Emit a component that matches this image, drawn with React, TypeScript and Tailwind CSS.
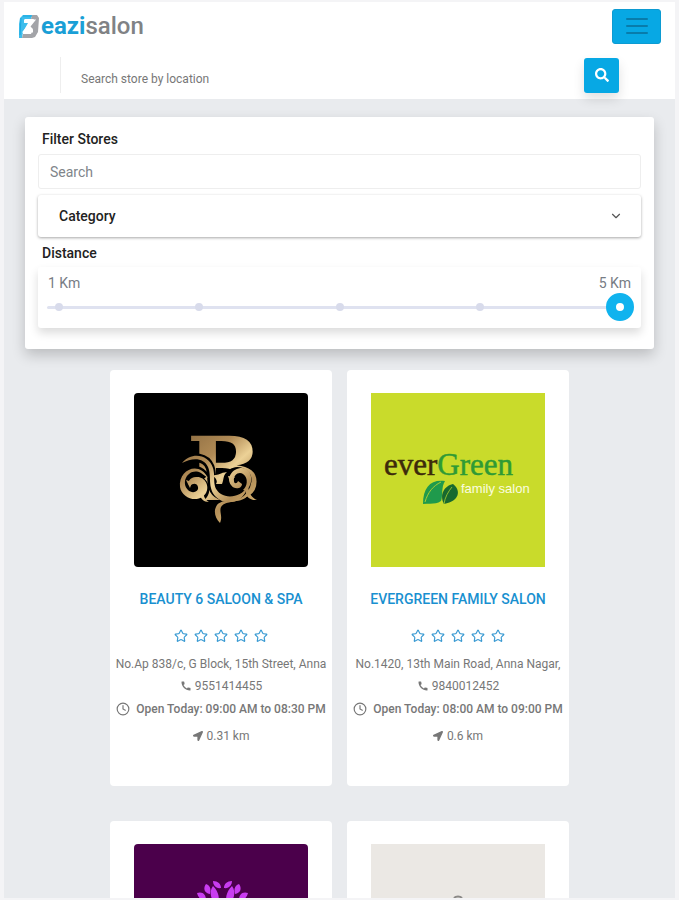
import React, { useState } from 'react';
import { FaLocationArrow, FaSearch } from 'react-icons/fa';
import { MdCall } from 'react-icons/md';
import { ChevronDown, Clock, Star } from 'lucide-react';

interface Store {
  id: number;
  logo: React.ReactNode;
  name?: string;
  address?: string;
  phone?: string;
  hours?: string;
  distance?: string;
}

const BrandMark = () => (
  <svg viewBox="0 0 21 25" className="h-[25px] w-[21px]" fill="none" aria-hidden="true">
    <path d="M5 1h9l-1 4H7L6 9h4L5 18l-1 6H1V10l1-6z" fill="#3dbdec" />
    <path d="M14 1h5l2 3-1 14-3 5-3 1H4l1-4h8l2-5-3-3 4-7h-3z" fill="#a3a4a8" />
    <path d="M6 7h9L7 17h8" stroke="#fff" strokeWidth="3" />
    <path d="M3 4 2 21M5 2h9" stroke="#19a8e0" strokeWidth="1" />
  </svg>
);

const BeautyLogo = () => (
  <svg viewBox="0 0 174 174" className="size-full rounded-sm bg-black" role="img" aria-label="Beauty 6">
    <defs>
      <linearGradient id="gold" gradientUnits="userSpaceOnUse" x1="50" y1="42" x2="125" y2="125">
        <stop offset="0" stopColor="#8f6f43" />
        <stop offset="0.3" stopColor="#b08a55" />
        <stop offset="0.5" stopColor="#ecd196" />
        <stop offset="0.7" stopColor="#b48f58" />
        <stop offset="1" stopColor="#e3c27d" />
      </linearGradient>
    </defs>
    <text x="53" y="107" fontSize="88" fontWeight="bold" fontFamily="DejaVu Serif, serif" fill="url(#gold)">B</text>
    <path d="M72 84C60 68 45 82 47 95s20 16 24 4c2-8-7-17-14-11" stroke="#000" strokeWidth="8" fill="#000" />
    <path d="M48 69c12-7 24-5 28 5 4 11-2 22 10 28 12 5 25-1 27-14 1-9-11-12-16-7" stroke="#000" strokeWidth="9" fill="none" />
    <path d="M86 86c6-12 20-12 25-4 3 9-3 18-13 19-8 0-13-6-12-15z" fill="#000" />
    <g fill="url(#gold)">
      <path d="M48 70c10-12 27-8 31 5 3 10-2 19 8 26 8 5 21 2 26-7-2 15-21 20-31 10-9-9-4-21-8-30-4-9-15-10-26-4z" />
      <path d="M74 85C65 67 44 77 46 94c2 12 19 17 26 6 4-7-1-17-10-16-6 0-10 6-6 9 3-3 7-3 8 1 1 5-6 7-10 3-8-8 1-23 13-17z" />
      <path d="M112 98c8-7 7-22-4-23-10 0-16 10-11 17 3 5 11 4 11-1l-4-3c-1 3-4 3-4 0-1-6 5-10 9-7 6 4 4 13 0 16z" />
      <path d="M114 102c-5 9-22 4-27 12-2 5 2 9-1 16-5-5-7-12-3-18 6-7 18-2 31-10zM114 93c1 8 4 12 9 14-8 1-13-5-11-12zM70 97c-1 7 1 9 5 12-7 0-10-5-8-11zM82 91c2-3 0-6-4-9 6 1 7-2 15-3-4 3-3 7-5 12zM52 87l6 2-2 6zM94 83l7 1-5 5z" />
    </g>
  </svg>
);

const EvergreenLogo = () => (
  <svg viewBox="0 0 174 174" className="size-full bg-[#c9db2b]" role="img" aria-label="Evergreen family salon">
    <text x="13" y="82" fontSize="31" fontFamily="Liberation Serif, serif" strokeWidth="0.5" fill="#3d2a0b" stroke="#3d2a0b">
      ever<tspan fill="#2f9a35" stroke="#2f9a35">Green</tspan>
    </text>
    <text x="90" y="100" fontSize="13" fontFamily="Liberation Sans, sans-serif" fill="#fbfde0">family salon</text>
    <path d="M52 111c0-17 8-25 22-23-4 6-2 16-4 20-5 4-10 2-18 3z" fill="#1f9a4c" />
    <path d="M54 109c3-10 8-16 16-20" stroke="#a8ce33" strokeWidth="1" fill="none" />
    <path d="M73 111c-5-9 0-18 9-20 8 6 7 17-9 20z" fill="#17682f" />
    <path d="M73 111c1-7 4-12 8-17" stroke="#8bbd2f" strokeWidth="1" fill="none" />
  </svg>
);

const LotusLogo = () => (
  <svg viewBox="0 0 174 174" className="size-full rounded-sm bg-[#4b004b]" role="img" aria-label="Lotus">
    <g fill="#c83cf0">
      <path d="M87 44c-5 1-8-3-8-7 5 0 8 3 8 7zM90 44c5 1 8-3 8-7-5 0-8 3-8 7z" />
      <path d="M76 50c-6-1-7-6-4-10 5 2 5 6 4 10zM101 50c6-1 7-6 4-10-5 2-5 6-4 10z" />
      <path d="M79 42c-5 7-1 14 3 20 5-6 3-14-3-20zM98 42c5 7 1 14-3 20-5-6-3-14 3-20z" />
      <path d="M72 56c-5 1-8-3-9-7 6-2 9 2 9 7zM105 56c5 1 8-3 9-7-6-2-9 2-9 7z" />
      <path d="M89 60c-7 8-7 17 0 25 7-8 7-17 0-25zM62 62c2 12 11 20 24 23-2-12-10-20-24-23zM115 62c-2 12-11 20-24 23 2-12 10-20 24-23z" />
    </g>
  </svg>
);

const PlainLogo = () => (
  <svg viewBox="0 0 174 174" className="size-full bg-[#ebe8e4]" role="img" aria-label="Salon">
    <path d="M83 54c2-2 6-2 8 0" stroke="#8b8987" strokeWidth="2" fill="none" />
  </svg>
);

const stores: Store[] = [
  {
    id: 1,
    logo: <BeautyLogo />,
    name: 'BEAUTY 6 SALOON & SPA',
    address: 'No.Ap 838/c, G Block, 15th Street, Anna',
    phone: '9551414455',
    hours: '09:00 AM to 08:30 PM',
    distance: '0.31 km',
  },
  {
    id: 2,
    logo: <EvergreenLogo />,
    name: 'EVERGREEN FAMILY SALON',
    address: 'No.1420, 13th Main Road, Anna Nagar,',
    phone: '9840012452',
    hours: '08:00 AM to 09:00 PM',
    distance: '0.6 km',
  },
  { id: 3, logo: <LotusLogo /> },
  { id: 4, logo: <PlainLogo /> },
];

const StoreCard: React.FC<{ store: Store }> = ({ store }) => (
  <article className="flex min-h-[416px] flex-col items-center rounded-sm bg-white pt-[23px] text-xs text-[#777]">
    <div className="size-[174px]">{store.logo}</div>
    {store.name && (
      <>
        <h2 className="mt-5 text-sm leading-6 font-medium">
          <a href="#" className="text-[#1990d0]">{store.name}</a>
        </h2>
        <div className="mt-[18px] flex gap-[6px] text-[#3b9bd3]">
          {[1, 2, 3, 4, 5].map((n) => (
            <Star key={n} size={14} strokeWidth={2} />
          ))}
        </div>
        <p className="mt-[10px] leading-[22px] whitespace-nowrap">{store.address}</p>
        <p className="flex items-center gap-[3px] leading-[22px]">
          <MdCall size={12} />
          {store.phone}
        </p>
        <p className="flex items-center gap-[6px] leading-6 font-medium whitespace-nowrap">
          <Clock size={14} strokeWidth={2} />
          Open Today: {store.hours}
        </p>
        <p className="mt-[3px] flex items-center gap-1 leading-6">
          <FaLocationArrow size={10} />
          {store.distance}
        </p>
      </>
    )}
  </article>
);

const Header = () => (
  <header className="bg-white pt-[6px] pb-[6px]">
    <div className="flex items-center justify-between px-[14px]">
      <a href="#" className="flex items-center gap-[2px] text-2xl leading-9 font-bold text-[#1a9fd6]">
        <BrandMark />
        <span>eazi<span className="font-medium text-[#808285]">salon</span></span>
      </a>
      <button
        type="button"
        aria-label="Menu"
        className="flex h-[35px] w-[49px] items-center justify-center rounded-[3px] border border-[#0c9bd2] bg-[#07a8e4] text-[#087cab]"
      >
        <svg viewBox="0 0 22 18" className="h-[18px] w-[22px]" stroke="currentColor" strokeWidth="2" strokeLinecap="round">
          <path d="M1 2h20M1 9h20M1 16h20" />
        </svg>
      </button>
    </div>
    <form className="mx-14 mt-[13px] flex items-center" onSubmit={(e) => e.preventDefault()}>
      <input
        type="text"
        aria-label="Search store by location"
        placeholder="Search store by location"
        className="h-9 min-w-0 flex-1 border-l border-[#eee] pt-2 pl-5 text-xs text-[#666] outline-none placeholder:text-[#777]"
      />
      <button
        type="submit"
        aria-label="Search"
        className="flex size-[35px] items-center justify-center rounded-[3px] bg-[#07a8e4] text-white shadow-[0_6px_12px_rgba(0,0,0,0.12)]"
      >
        <FaSearch size={14} />
      </button>
    </form>
  </header>
);

const FilterPanel = () => {
  const [distance, setDistance] = useState(5);

  return (
    <section className="mx-[21px] mt-[18px] rounded-[3px] bg-white px-[13px] pt-3 pb-[21px] text-sm shadow-[0_6px_14px_rgba(0,0,0,0.2)]">
      <label htmlFor="store-search" className="block pl-1 leading-5 font-medium text-[#222]">
        Filter Stores
      </label>
      <input
        id="store-search"
        type="text"
        placeholder="Search"
        className="mt-[5px] block h-[35px] w-full rounded-[3px] border border-[#eee] px-[11px] outline-none placeholder:text-[#80858a]"
      />
      <button
        type="button"
        className="mt-[6px] flex h-[42px] w-full items-center justify-between rounded-[3px] bg-white pr-[18px] pl-[21px] font-medium text-[#222] shadow-[0_1px_3px_rgba(0,0,0,0.35)]"
      >
        Category
        <ChevronDown size={14} strokeWidth={2} className="text-[#555]" />
      </button>
      <label htmlFor="distance" className="mt-[6px] block pl-1 leading-5 font-medium text-[#222]">
        Distance
      </label>
      <div className="mt-1 rounded-[3px] px-[7px] pt-[6px] pb-[7px] shadow-[0_5px_10px_rgba(0,0,0,0.14)]">
        <div className="flex justify-between px-[3px] leading-5 text-[#777c84]">
          <span>1 Km</span>
          <span>5 Km</span>
        </div>
        <div className="grid items-center">
          <div className="col-start-1 row-start-1 mx-[2px] h-[3px] rounded bg-[#dfe2f0]" />
          <div className="col-start-1 row-start-1 flex justify-between px-[10px]">
            {[1, 2, 3, 4, 5].map((km) => (
              <span key={km} className="size-2 rounded-full bg-[#d8dbeb]" />
            ))}
          </div>
          <input
            id="distance"
            type="range"
            min={1}
            max={5}
            value={distance}
            onChange={(e) => setDistance(Number(e.target.value))}
            className="z-10 col-start-1 row-start-1 h-7 w-full appearance-none bg-transparent [&::-webkit-slider-thumb]:size-7 [&::-webkit-slider-thumb]:appearance-none [&::-webkit-slider-thumb]:rounded-full [&::-webkit-slider-thumb]:border-[10px] [&::-webkit-slider-thumb]:border-[#10b3ee] [&::-webkit-slider-thumb]:bg-white"
          />
        </div>
      </div>
    </section>
  );
};

export default function App() {
  return (
    <div className="flex h-screen flex-col bg-[#f4f4f6] px-1 pt-[2px] pb-[2px] font-[Roboto,sans-serif]">
      <div className="flex-1 overflow-y-auto bg-[#e9ebee] [scrollbar-width:none]">
        <Header />
        <FilterPanel />
        <main className="mt-[21px] grid grid-cols-[repeat(2,222px)] justify-center gap-x-[15px] gap-y-[35px] pb-9">
          {stores.map((store) => (
            <StoreCard key={store.id} store={store} />
          ))}
        </main>
      </div>
    </div>
  );
}
